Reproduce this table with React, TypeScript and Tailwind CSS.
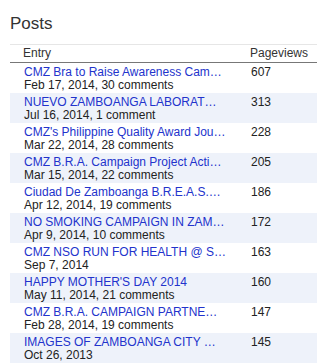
import React from "react";

const rows = [
  { title: "CMZ Bra to Raise Awareness Cam…", meta: "Feb 17, 2014, 30 comments", views: "607" },
  { title: "NUEVO ZAMBOANGA LABORAT…", meta: "Jul 16, 2014, 1 comment", views: "313" },
  { title: "CMZ's Philippine Quality Award Jou…", meta: "Mar 22, 2014, 28 comments", views: "228" },
  { title: "CMZ B.R.A. Campaign Project Acti…", meta: "Mar 15, 2014, 22 comments", views: "205" },
  { title: "Ciudad De Zamboanga B.R.E.A.S.…", meta: "Apr 12, 2014, 19 comments", views: "186" },
  { title: "NO SMOKING CAMPAIGN IN ZAM…", meta: "Apr 9, 2014, 10 comments", views: "172" },
  { title: "CMZ NSO RUN FOR HEALTH @ S…", meta: "Sep 7, 2014", views: "163" },
  { title: "HAPPY MOTHER'S DAY 2014", meta: "May 11, 2014, 21 comments", views: "160" },
  { title: "CMZ B.R.A. CAMPAIGN PARTNE…", meta: "Feb 28, 2014, 19 comments", views: "147" },
  { title: "IMAGES OF ZAMBOANGA CITY …", meta: "Oct 26, 2013", views: "145" },
];

export default function App() {
  return (
    <div className="w-[317px] h-[363px] bg-white overflow-hidden" style={{ fontFamily: '"Liberation Sans", Arial, sans-serif' }}>
      <div className="pl-[10px] pt-[14px] h-[44px] text-[17px] leading-[20px] text-[#333]">Posts</div>
      <div className="ml-[10px] border-t border-[#e6e6e6]">
        <div className="flex h-[18px] border-b border-[#777] text-[12px] leading-[14px] text-[#333] pt-[1px]">
          <div className="w-[240px] pl-[13px]">Entry</div>
          <div>Pageviews</div>
        </div>
        {rows.map((r, i) => (
          <div key={i} className={`flex h-[30px] pt-[3px] text-[12px] leading-[13px] ${i % 2 === 1 ? "bg-[#eef2fa]" : "bg-white"}`}>
            <div className="w-[240px] pl-[14px]">
              <div className="text-[#2233cc] whitespace-nowrap">{r.title}</div>
              <div className="text-[#222]">{r.meta}</div>
            </div>
            <div className="pl-[1px] text-[#222]">{r.views}</div>
          </div>
        ))}
      </div>
    </div>
  );
}
